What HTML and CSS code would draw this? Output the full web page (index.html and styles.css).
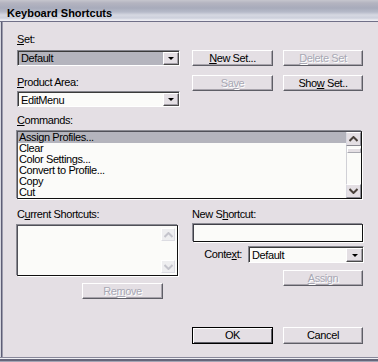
FILE: index.html
```
<!DOCTYPE html>
<html>
<head>
<meta charset="utf-8">
<link rel="stylesheet" href="styles.css">
</head>
<body>
<div class="window">
  <div class="titlebar"><span class="title">Keyboard Shortcuts</span></div>
  <div class="client">
    <div class="top">
      <div class="col-left">
        <div class="label lbl-set"><u>S</u>et:</div>
        <div class="select select-grey"><span class="value">Default</span><span class="drop"><i class="tri"></i></span></div>
        <div class="label lbl-area"><u>P</u>roduct Area:</div>
        <div class="select"><span class="value">EditMenu</span><span class="drop"><i class="tri"></i></span></div>
      </div>
      <div class="col-right">
        <div class="btn"><u>N</u>ew Set...</div>
        <div class="btn disabled"><u>D</u>elete Set</div>
        <div class="btn disabled">Sa<u>v</u>e</div>
        <div class="btn">Sho<u>w</u> Set..</div>
      </div>
    </div>
    <div class="label lbl-cmd"><u>C</u>ommands:</div>
    <div class="listbox cmd-list">
      <div class="items">
        <div class="item selected">Assign Profiles...</div>
        <div class="item">Clear</div>
        <div class="item">Color Settings...</div>
        <div class="item">Convert to Profile...</div>
        <div class="item">Copy</div>
        <div class="item">Cut</div>
      </div>
      <div class="vscroll">
        <div class="sbtn"><svg width="9" height="6" viewBox="0 0 9 6"><polyline points="0.5,5 4.5,1 8.5,5" fill="none" stroke="#4a423c" stroke-width="2"/></svg></div>
        <div class="track"><div class="thumb"></div></div>
        <div class="sbtn"><svg width="9" height="6" viewBox="0 0 9 6"><polyline points="0.5,1 4.5,5 8.5,1" fill="none" stroke="#4a423c" stroke-width="2"/></svg></div>
      </div>
    </div>
    <div class="bottom">
      <div class="col-cur">
        <div class="label">C<u>u</u>rrent Shortcuts:</div>
        <div class="listbox cur-list">
          <div class="items"></div>
          <div class="vscroll faint">
            <div class="fbtn"><svg width="9" height="6" viewBox="0 0 9 6"><polyline points="0.5,5 4.5,1 8.5,5" fill="none" stroke="#c4c4cc" stroke-width="2"/></svg></div>
            <div class="ftrack"></div>
            <div class="fbtn"><svg width="9" height="6" viewBox="0 0 9 6"><polyline points="0.5,1 4.5,5 8.5,1" fill="none" stroke="#c4c4cc" stroke-width="2"/></svg></div>
          </div>
        </div>
        <div class="btn disabled btn-remove">Re<u>m</u>ove</div>
      </div>
      <div class="col-new">
        <div class="label lbl-new">New S<u>h</u>ortcut:</div>
        <div class="textbox"></div>
        <div class="context-row">
          <span class="label ctx-label">Conte<u>x</u>t:</span>
          <div class="select ctx-select"><span class="value">Default</span><span class="drop"><i class="tri"></i></span></div>
        </div>
        <div class="btn disabled btn-assign"><u>A</u>ssign</div>
      </div>
    </div>
    <div class="footer">
      <div class="btn btn-default btn-ok">OK</div>
      <div class="btn btn-cancel">Cancel</div>
    </div>
  </div>
  <div class="bottom-edge"></div>
</div>
</body>
</html>
```
FILE: styles.css
```
html, body {
  margin: 0;
  padding: 0;
  background: #e4dfe4;
}
body {
  font-family: "Liberation Sans", Arial, sans-serif;
  font-size: 11px;
  letter-spacing: -0.4px;
  color: #000;
}
.window {
  width: 378px;
  height: 362px;
  display: flex;
  flex-direction: column;
  overflow: hidden;
  background: #e4dfe4;
}
.titlebar {
  height: 21px;
  flex: none;
  border-bottom: 1px solid #707088;
  background: linear-gradient(to bottom, #c6c6ce 0px, #b4b4c0 3px, #a8abbb 8px, #b6bac9 12px, #d6d8e2 15px, #cdd0dc 18px, #ececf2 20px, #ececf2 21px);
  padding-left: 7px;
  box-sizing: content-box;
}
.title {
  display: block;
  font-weight: bold;
  font-size: 11px;
  letter-spacing: 0;
  line-height: 13px;
  padding-top: 7px;
}
.client {
  flex: 1;
  padding-left: 17px;
  background: linear-gradient(to right, #d6d6de 0px, #d6d6de 1px, #5e5e76 1px, #5e5e76 2px, #9c9cac 2px, #9c9cac 3px, #e4dfe4 3px);
}
.bottom-edge {
  height: 5px;
  flex: none;
  background: linear-gradient(to bottom, #88889a 0px, #88889a 1px, #f0f0f4 1px, #f0f0f4 2px, #66667a 2px, #66667a 4px, #a4a4b4 4px);
}
.label {
  line-height: 13px;
  height: 13px;
  white-space: nowrap;
}
u { text-decoration: underline; text-underline-offset: 1px; }

.top {
  display: grid;
  grid-template-columns: 163px 171px;
  column-gap: 12px;
  padding-top: 11px;
}
.col-left { display: flex; flex-direction: column; }
.lbl-set { margin-bottom: 4px; }
.lbl-area { margin-top: 10px; margin-bottom: 2px; }

.select {
  height: 16px;
  box-sizing: border-box;
  display: flex;
  border: 1px solid;
  border-color: #84848c #ffffff #ffffff #84848c;
  background: #fbfbf9;
  box-shadow: inset 1px 1px 0 #3a3a3a;
}
.select .value {
  flex: 1;
  line-height: 14px;
  padding-left: 3px;
  padding-top: 1px;
}
.select-grey .value { background: #b4b4bd; margin: 1px 0 0 1px; padding-left: 2px; padding-top: 0; line-height: 13px; }
.drop {
  width: 16px;
  box-sizing: border-box;
  border: 1px solid;
  border-color: #ffffff #4a4a4a #4a4a4a #ffffff;
  background: #e4dfe4;
  box-shadow: inset -1px -1px 0 #a4a0a8;
  display: flex;
  align-items: center;
  justify-content: center;
  margin-top: 1px;
}
.tri {
  display: block;
  width: 0;
  height: 0;
  border-left: 3px solid transparent;
  border-right: 3px solid transparent;
  border-top: 3px solid #000;
}

.col-right {
  display: grid;
  grid-template-columns: 81px 80px;
  column-gap: 10px;
  row-gap: 9px;
  padding-top: 17px;
  align-content: start;
}
.btn {
  height: 16px;
  box-sizing: border-box;
  border: 1px solid;
  border-color: #ffffff #5e5e66 #5e5e66 #ffffff;
  box-shadow: inset -1px -1px 0 #a8a4ac;
  background: #e4dfe4;
  text-align: center;
  line-height: 14px;
  white-space: nowrap;
}
.btn.disabled {
  color: #a8a8b4;
  text-shadow: 1px 1px 0 #ffffff;
}
.btn-default {
  border-color: #000;
  box-shadow: inset 1px 1px 0 #ffffff, inset -1px -1px 0 #5e5e66;
}

.lbl-cmd { margin-top: 7px; margin-bottom: 4px; }
.listbox {
  display: flex;
  box-sizing: border-box;
  border: 1px solid #101010;
  border-top-color: #505058;
  border-left-color: #505058;
  background: #fbfbf9;
  box-shadow: -1px -1px 0 #8a8a92, 1px 1px 0 #ffffff;
}
.cmd-list {
  width: 345px;
  height: 68px;
}
.items { flex: 1; overflow: hidden; }
.item {
  height: 11px;
  line-height: 11px;
  padding-left: 1px;
  white-space: nowrap;
}
.item.selected { background: #b4b4bd; }
.vscroll {
  width: 15px;
  display: flex;
  flex-direction: column;
}
.sbtn {
  height: 14px;
  box-sizing: border-box;
  border: 1px solid;
  border-color: #ffffff #8a8a92 #8a8a92 #d8d8e0;
  background: #e4dfe4;
  display: flex;
  align-items: center;
  justify-content: center;
}
.track {
  flex: 1;
  border-left: 1px solid #d0d0d6;
  background: #fbfbf9;
  padding-top: 2px;
}
.thumb {
  height: 5px;
  box-sizing: border-box;
  border: 1px solid #a8a8b0;
  border-left-color: #ffffff;
  border-top-color: #ffffff;
  background: #e4dfe4;
}

.bottom {
  display: grid;
  grid-template-columns: 161px 171px;
  column-gap: 14px;
  margin-top: 9px;
}
.col-cur { display: flex; flex-direction: column; }
.col-cur .label { margin-bottom: 4px; }
.cur-list { height: 51px; }
.vscroll.faint { padding: 2px 2px 2px 0; width: 14px; }
.fbtn {
  height: 13px;
  box-sizing: border-box;
  border: 1px solid;
  border-color: #ffffff #dcdce2 #dcdce2 #ffffff;
  background: #eeeef0;
  display: flex;
  align-items: center;
  justify-content: center;
}
.ftrack { flex: 1; }
.btn-remove {
  width: 81px;
  margin-top: 7px;
  margin-left: 65px;
}
.col-new { display: flex; flex-direction: column; }
.lbl-new { margin-bottom: 3px; }
.textbox {
  height: 18px;
  box-sizing: border-box;
  border: 1px solid #101010;
  border-top-color: #404048;
  border-left-color: #404048;
  background: #fbfbf9;
  box-shadow: -1px -1px 0 #8a8a92, 1px 1px 0 #ffffff;
  margin-left: 1px;
}
.context-row {
  display: flex;
  justify-content: flex-end;
  align-items: center;
  margin-top: 4px;
  margin-right: -1px;
}
.ctx-label { margin-right: 6px; line-height: 17px; height: 17px; }
.ctx-select { width: 116px; height: 17px; }
.ctx-select .drop { width: 17px; }
.btn-assign {
  width: 80px;
  margin-top: 7px;
  margin-left: auto;
}
.footer {
  display: flex;
  column-gap: 10px;
  margin-top: 28px;
  padding-left: 175px;
}
.btn-ok { width: 81px; height: 17px; line-height: 15px; }
.btn-cancel { width: 80px; height: 17px; line-height: 15px; }
```
